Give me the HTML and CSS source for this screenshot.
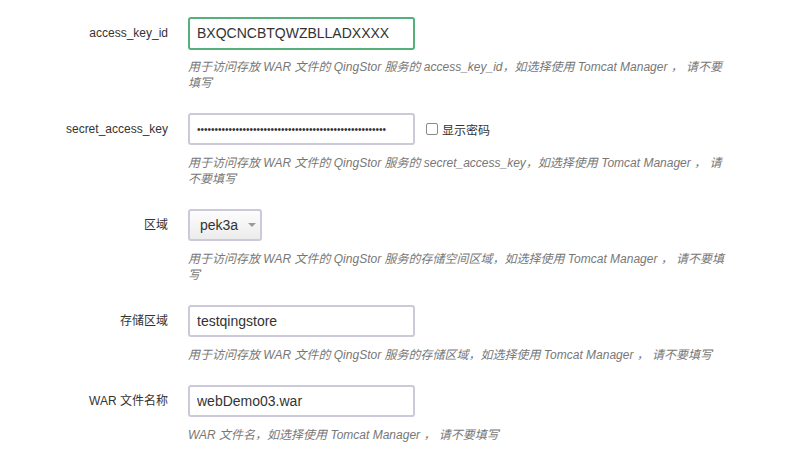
FILE: index.html
```html
<!DOCTYPE html>
<html lang="zh-CN">
<head>
<meta charset="utf-8">
<title>QingStor 设置</title>
<link rel="stylesheet" href="styles.css">
</head>
<body>
<form class="form">
  <div class="row">
    <label class="label">access_key_id</label>
    <div class="field">
      <div class="control">
        <input class="input input-focus" type="text" value="BXQCNCBTQWZBLLADXXXX">
      </div>
      <p class="help">用于访问存放 WAR 文件的 QingStor 服务的 access_key_id，如选择使用 Tomcat Manager ， 请不要填写</p>
    </div>
  </div>
  <div class="row">
    <label class="label">secret_access_key</label>
    <div class="field">
      <div class="control">
        <input class="input input-pass" type="password" value="aaaaaaaaaaaaaaaaaaaaaaaaaaaaaaaaaaaaaaaaaaaaaaaaaaaaaa">
        <label class="check"><span class="box"></span>显示密码</label>
      </div>
      <p class="help">用于访问存放 WAR 文件的 QingStor 服务的 secret_access_key，如选择使用 Tomcat Manager ， 请不要填写</p>
    </div>
  </div>
  <div class="row">
    <label class="label">区域</label>
    <div class="field">
      <div class="control">
        <div class="select"><span>pek3a</span><span class="caret"></span></div>
      </div>
      <p class="help">用于访问存放 WAR 文件的 QingStor 服务的存储空间区域，如选择使用 Tomcat Manager ， 请不要填写</p>
    </div>
  </div>
  <div class="row">
    <label class="label">存储区域</label>
    <div class="field">
      <div class="control">
        <input class="input" type="text" value="testqingstore">
      </div>
      <p class="help">用于访问存放 WAR 文件的 QingStor 服务的存储区域，如选择使用 Tomcat Manager ， 请不要填写</p>
    </div>
  </div>
  <div class="row">
    <label class="label">WAR 文件名称</label>
    <div class="field">
      <div class="control">
        <input class="input" type="text" value="webDemo03.war">
      </div>
      <p class="help">WAR 文件名，如选择使用 Tomcat Manager ， 请不要填写</p>
    </div>
  </div>
</form>
</body>
</html>
```

FILE: styles.css
```css
* { box-sizing: border-box; }
html, body {
  margin: 0;
  padding: 0;
  background: #fff;
}
body {
  font-family: "Liberation Sans", "Noto Sans CJK SC", sans-serif;
  color: #333;
  font-size: 12px;
}
.form {
  padding-top: 17px;
}
.row {
  display: grid;
  grid-template-columns: 168px 1fr;
  column-gap: 20px;
  margin-bottom: 22px;
}
.label {
  text-align: right;
  line-height: 32px;
  font-size: 12px;
  color: #333;
}
.control {
  display: flex;
  align-items: center;
  height: 32px;
}
.input {
  width: 227px;
  height: 32px;
  border: 2px solid #cbc9da;
  border-radius: 3px;
  padding: 0 7px;
  font-family: "Liberation Sans", "Noto Sans CJK SC", sans-serif;
  font-size: 14px;
  color: #333;
  background: #fff;
  outline: none;
}
.input-focus {
  border-color: #55b07c;
  height: 33px;
}
.input-pass {
  font-size: 10px;
  letter-spacing: 0;
}
.check {
  display: flex;
  align-items: center;
  margin-left: 11px;
  font-size: 12px;
  color: #333;
}
.box {
  width: 12px;
  height: 12px;
  border: 1px solid #8a8a8a;
  border-radius: 2px;
  margin-right: 4px;
  background: #fff;
}
.select {
  display: flex;
  align-items: center;
  width: 74px;
  height: 32px;
  border: 2px solid #cbc9da;
  border-radius: 3px;
  padding-left: 10px;
  font-size: 14px;
  color: #333;
  background: linear-gradient(#fdfdfd, #ececec);
}
.caret {
  width: 0;
  height: 0;
  margin-left: 10px;
  border-left: 4px solid transparent;
  border-right: 4px solid transparent;
  border-top: 4px solid #9a9a9a;
}
.help {
  margin: 10px 0 0;
  width: 540px;
  font-size: 12px;
  line-height: 16px;
  font-style: italic;
  color: #777;
}
```
